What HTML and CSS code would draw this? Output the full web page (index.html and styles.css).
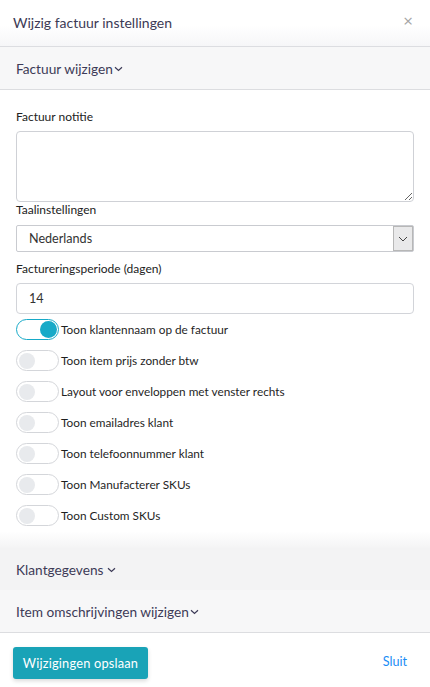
FILE: index.html
```html
<!DOCTYPE html>
<html lang="nl">
<head>
<meta charset="utf-8">
<title>Wijzig factuur instellingen</title>
<link rel="stylesheet" href="styles.css">
</head>
<body>
<div class="modal">
  <div class="modal-header">
    <span class="modal-title">Wijzig factuur instellingen</span>
    <span class="close">&times;</span>
  </div>
  <div class="section-head">Factuur wijzigen<svg class="chev" width="9" height="6" viewBox="0 0 9 6"><path d="M1 1.2 L4.5 4.5 L8 1.2" fill="none" stroke="#3d3b57" stroke-width="1.2"/></svg></div>
  <div class="body">
    <label class="lbl">Factuur notitie</label>
    <textarea class="area"></textarea>
    <label class="lbl lbl-tight">Taalinstellingen</label>
    <div class="select-wrap">
      <div class="select">Nederlands</div>
      <span class="sel-btn"><svg width="10" height="6" viewBox="0 0 10 6"><path d="M1 1 L5 5 L9 1" fill="none" stroke="#444" stroke-width="1"/></svg></span>
    </div>
    <label class="lbl lbl-space">Factureringsperiode (dagen)</label>
    <div class="input">14</div>
    <div class="toggles">
      <div class="trow"><span class="tog on"><span class="knob"></span></span><span class="tlabel">Toon klantennaam op de factuur</span></div>
      <div class="trow"><span class="tog"><span class="knob"></span></span><span class="tlabel">Toon item prijs zonder btw</span></div>
      <div class="trow"><span class="tog"><span class="knob"></span></span><span class="tlabel">Layout voor enveloppen met venster rechts</span></div>
      <div class="trow"><span class="tog"><span class="knob"></span></span><span class="tlabel">Toon emailadres klant</span></div>
      <div class="trow"><span class="tog"><span class="knob"></span></span><span class="tlabel">Toon telefoonnummer klant</span></div>
      <div class="trow"><span class="tog"><span class="knob"></span></span><span class="tlabel">Toon Manufacterer SKUs</span></div>
      <div class="trow"><span class="tog"><span class="knob"></span></span><span class="tlabel">Toon Custom SKUs</span></div>
    </div>
  </div>
  <div class="fade"></div>
  <div class="section-head band2">Klantgegevens<svg class="chev chev-gap" width="9" height="6" viewBox="0 0 9 6"><path d="M1 1.2 L4.5 4.5 L8 1.2" fill="none" stroke="#3d3b57" stroke-width="1.2"/></svg></div>
  <div class="section-head band3">Item omschrijvingen wijzigen<svg class="chev" width="9" height="6" viewBox="0 0 9 6"><path d="M1 1.2 L4.5 4.5 L8 1.2" fill="none" stroke="#3d3b57" stroke-width="1.2"/></svg></div>
  <div class="footer">
    <button class="btn">Wijzigingen opslaan</button>
    <a class="link">Sluit</a>
  </div>
</div>
</body>
</html>
```
FILE: styles.css
```css
* { box-sizing: border-box; }
html, body { margin: 0; padding: 0; background: #fff; }
body { font-family: Lato, "Open Sans", sans-serif; color: #212121; }
.modal { width: 430px; height: 687px; overflow: hidden; display: flex; flex-direction: column; }
.modal-header {
  height: 47px; flex: none;
  display: flex; align-items: center; justify-content: space-between;
  padding: 0 17px 2px 13px;
  border-bottom: 1px solid #dcdde1;
  background: linear-gradient(#fff 0%, #fff 55%, #f6f6f8 100%);
}
.modal-title { font-size: 14px; color: #3c3a55; }
.close { font-size: 17px; color: #a4a4a4; line-height: 1; margin-top: -4px; font-family: "Open Sans", sans-serif; }
.section-head {
  height: 43px; flex: none;
  display: flex; align-items: center;
  padding-left: 16px;
  font-size: 13.7px; color: #3d3b57;
  background: #f7f7f8;
  border-bottom: 1px solid #dcdde0;
}
.chev { margin-left: 1px; margin-top: 2px; }
.chev-gap { margin-left: 3px; }
.body { padding: 19px 16px 0 16px; flex: none; }
.lbl { display: block; font-size: 12px; line-height: 16px; height: 16px; color: #222; }
.area {
  display: block; width: 398px; height: 71px; margin-top: 6px;
  border: 1px solid #cfd1d6; border-radius: 4px; resize: vertical;
  font-family: inherit;
}
.lbl-tight { margin-top: 0; }
.select-wrap { position: relative; margin-top: 7px; width: 398px; }
.select {
  height: 27px; border: 1px solid #c9cbd0; border-radius: 2px;
  padding-left: 12px; font-size: 12.6px; line-height: 25px; color: #333;
}
.sel-btn {
  position: absolute; right: 1px; top: 1px; width: 20px; height: 25px;
  background: #e9e9ea; border: 1px solid #b7b7b7;
  display: flex; align-items: center; justify-content: center;
}
.lbl-space { margin-top: 9px; }
.input {
  margin-top: 6px; width: 398px; height: 31px;
  border: 1px solid #d2d4d9; border-radius: 4px;
  padding-left: 12px; font-size: 12.6px; line-height: 29px; color: #333;
}
.toggles { display: flex; flex-direction: column; }
.trow { height: 31px; display: flex; align-items: center; }
.tog {
  width: 43px; height: 21px; border-radius: 11px;
  border: 1px solid #d4d6da; background: #fff;
  display: flex; align-items: center; padding: 0 2px;
  flex: none;
}
.knob { width: 16px; height: 16px; border-radius: 50%; background: #e8eaed; }
.tog.on { border-color: #17aac8; justify-content: flex-end; padding-right: 1px; }
.tog.on .knob { background: #17aac8; width: 17px; height: 17px; }
.tlabel { font-size: 11.8px; color: #1f1f1f; margin-left: 2px; }
.fade { height: 17px; flex: none; background: linear-gradient(#fff, #f4f4f5); }
.band2 { height: 42px; background: #f3f3f4; border-bottom: none; box-shadow: 0 2px 4px rgba(0,0,0,0.03); }
.band3 { height: 43px; background: #f7f7f8; }
.footer {
  flex: 1; display: flex; align-items: flex-start; justify-content: space-between;
  padding: 14px 23px 0 13px;
}
.btn {
  height: 32px; width: 135px; border: none; border-radius: 3px;
  background: #19a3b7; color: #fff; font-family: inherit; font-size: 12.8px;
  box-shadow: 0 2px 4px rgba(0,0,0,0.15); padding: 0; letter-spacing: 0.2px;
}
.link { color: #1a8cf5; font-size: 12.6px; margin-top: 7px; }
```
